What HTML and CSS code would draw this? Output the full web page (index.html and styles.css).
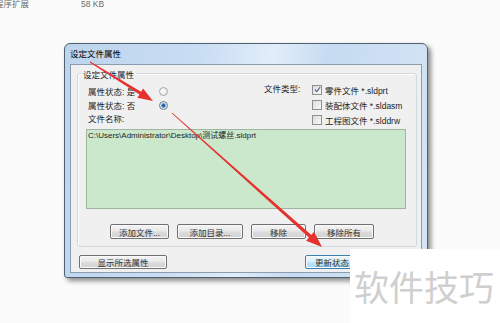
FILE: index.html
```html
<!DOCTYPE html>
<html lang="zh-CN">
<head>
    <meta charset="UTF-8">
    <meta name="viewport" content="width=device-width, initial-scale=1.0">
    <title>设定文件属性</title>
    <link rel="stylesheet" href="styles.css">
</head>
<body>
    <div class="top-row">
        <span class="fname">程序扩展</span>
        <span class="fsize">58 KB</span>
    </div>

    <div class="window">
        <div class="titlebar">设定文件属性</div>
        <div class="client">
            <div class="group">
                <div class="legend">设定文件属性</div>
                <div class="group-top">
                    <div class="states">
                        <div class="state-row"><span class="state-text">属性状态: 是</span><span class="radio"></span></div>
                        <div class="state-row"><span class="state-text">属性状态: 否</span><span class="radio checked"></span></div>
                        <div class="name-label">文件名称:</div>
                    </div>
                    <div class="types">
                        <span class="types-label">文件类型:</span>
                        <div class="type-list">
                            <div class="check-row">
                                <span class="check">
                                    <svg width="7" height="7" viewBox="0 0 7 7"><path d="M1 3.6 L2.8 5.6 L6.2 1" fill="none" stroke="#4a5d7a" stroke-width="1.1"/></svg>
                                </span>零件文件 *.sldprt
                            </div>
                            <div class="check-row"><span class="check"></span>装配体文件 *.sldasm</div>
                            <div class="check-row"><span class="check"></span>工程图文件 *.slddrw</div>
                        </div>
                    </div>
                </div>
                <div class="file-list">C:\Users\Administrator\Desktop\测试螺丝.sldprt</div>
                <div class="btn-row">
                    <button class="btn w-file">添加文件...</button>
                    <button class="btn w-dir">添加目录...</button>
                    <button class="btn w-del">移除</button>
                    <button class="btn w-all">移除所有</button>
                </div>
            </div>
            <div class="bottom-row">
                <button class="btn w-show">显示所选属性</button>
                <button class="btn w-update">更新状态</button>
            </div>
        </div>
    </div>

    <!-- annotation arrows drawn over the screenshot -->
    <svg class="arrows" width="500" height="323" viewBox="0 0 500 323">
        <polygon points="89.7,62.4 90.3,61.6 141.0,91.8 143.1,88.4 153,101 137.4,97.8 139.5,94.4" fill="#e5322d"/>
        <polygon points="171.7,113.3 172.3,112.7 311.3,235.0 314.1,231.8 322,247 306.1,240.8 308.9,237.6" fill="#e5322d"/>
    </svg>

    <div class="watermark">软件技巧</div>
</body>
</html>
```

FILE: styles.css
```css
body {
    margin: 0;
    width: 500px;
    height: 323px;
    overflow: hidden;
    position: relative;
    background-color: #fbfbfb;
    font-family: "Liberation Sans", "Noto Sans CJK SC", sans-serif;
    font-size: 8.5px;
    color: #1e1e1e;
}
.top-row {
    height: 43px;
    display: flex;
    color: #6a6a6a;
    line-height: 8px;
}
.fname {
    margin-left: -5px;
    width: 86px;
}
.window {
    margin-left: 64px;
    width: 364px;
    height: 235px;
    box-sizing: border-box;
    border: 1px solid #50606e;
    border-radius: 6px 6px 3px 3px;
    background: linear-gradient(100deg, #bcd4ee 0%, #cadef3 35%, #e2edf9 52%, #c6dbf1 66%, #d6e5f6 100%);
    box-shadow: 3px 3px 5px rgba(0, 0, 0, 0.45);
    display: flex;
    flex-direction: column;
    padding: 0 5px 4px 5px;
}
.titlebar {
    height: 20px;
    line-height: 21px;
    color: #000;
}
.client {
    flex: 1;
    background-color: #f0f0f0;
    border: 1px solid #8b9cae;
}
.group {
    margin: 8px 4px 0 6px;
    height: 174px;
    box-sizing: border-box;
    border: 1px solid #d0d9e0;
    border-radius: 3px;
    box-shadow: inset 1px 1px 0 #fff;
}
.legend {
    width: fit-content;
    margin: -4px 0 0 3px;
    padding: 0 2px;
    background-color: #f0f0f0;
    line-height: 11px;
}
.group-top {
    display: flex;
    align-items: flex-start;
    padding-left: 10px;
}
.states {
    width: 82px;
    margin-top: 3px;
}
.state-row {
    display: flex;
    align-items: center;
    height: 14px;
}
.state-text {
    width: 71px;
}
.radio {
    width: 7px;
    height: 7px;
    border: 1px solid #a8a8a8;
    border-radius: 50%;
    background: radial-gradient(circle at 40% 40%, #ffffff, #dcdcdc);
}
.radio.checked {
    background: radial-gradient(circle, #1f4f86 0, #3a78b8 1.6px, #d5e2ef 2.6px, #eef3f8 100%);
    border-color: #6c7c8c;
}
.name-label {
    height: 14px;
    line-height: 14px;
}
.types {
    display: flex;
    margin-left: 94px;
    margin-top: 1px;
}
.types-label {
    width: 48px;
    line-height: 15px;
}
.check-row {
    display: flex;
    align-items: center;
    height: 15px;
}
.check {
    width: 8px;
    height: 8px;
    border: 1px solid #8f8f8f;
    background: linear-gradient(135deg, #dcdcdc, #f8f8f8);
    margin-right: 3px;
    display: flex;
    align-items: center;
    justify-content: center;
}
.file-list {
    margin: 2px 0 0 8px;
    width: 320px;
    height: 80px;
    box-sizing: border-box;
    border: 1px solid #9fb59f;
    background-color: #cce8cc;
    padding: 1px;
    line-height: 10px;
    font-size: 8px;
}
.btn-row {
    display: flex;
    gap: 8px;
    margin: 15px 0 0 32px;
}
.btn {
    height: 15px;
    padding: 0;
    border: 1px solid #707070;
    border-radius: 2px;
    background: linear-gradient(#f4f4f4, #e8e8e8 48%, #dcdcdc 52%, #d2d2d2);
    font-family: "Liberation Sans", "Noto Sans CJK SC", sans-serif;
    font-size: 8.5px;
    color: #333;
    box-shadow: inset 0 0 0 1px #fafafa;
}
.w-file { width: 59px; }
.w-dir { width: 66px; }
.w-del { width: 55px; }
.w-all { width: 60px; }
.bottom-row {
    display: flex;
    gap: 138px;
    margin: 8px 0 0 8px;
}
.w-show {
    width: 88px;
    height: 14px;
}
.w-update {
    width: 54px;
    height: 14px;
    border-color: #3c7fb1;
    background: linear-gradient(#eaf6fd, #d9f0fc 48%, #bee6fd 52%, #a7d9f5);
}
.arrows {
    position: absolute;
    left: 0;
    top: 0;
    pointer-events: none;
}
.watermark {
    position: absolute;
    left: 350px;
    top: 249px;
    width: 150px;
    height: 74px;
    background-color: #fff;
    box-sizing: border-box;
    padding: 12px 0 0 4px;
    font-family: "Noto Sans CJK SC", sans-serif;
    font-size: 35px;
    line-height: 50px;
    color: #cfcfcf;
}
```
